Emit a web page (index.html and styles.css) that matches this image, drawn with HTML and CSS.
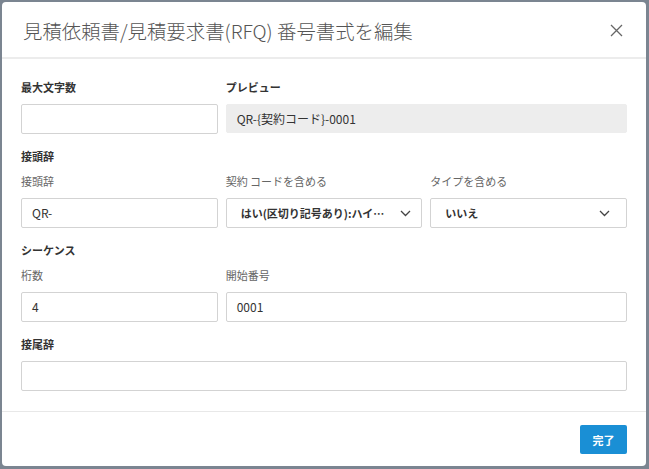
FILE: index.html
```html
<!DOCTYPE html>
<html lang="ja">
<head>
<meta charset="utf-8">
<title>番号書式を編集</title>
<link rel="stylesheet" href="styles.css">
</head>
<body>
<div class="modal">
  <div class="modal-header">
    <h1 class="modal-title">見積依頼書/見積要求書(RFQ) 番号書式を編集</h1>
    <button class="close" aria-label="閉じる">
      <svg width="13" height="13" viewBox="0 0 13 13"><path d="M1 1 L12 12 M12 1 L1 12" stroke="#666" stroke-width="1.3" fill="none"/></svg>
    </button>
  </div>
  <div class="modal-body">
    <div class="row">
      <div class="field">
        <div class="section-label">最大文字数</div>
        <div class="input"></div>
      </div>
      <div class="field span2">
        <div class="section-label">プレビュー</div>
        <div class="preview">QR-{契約コード}-0001</div>
      </div>
    </div>

    <div class="section">
      <div class="section-label">接頭辞</div>
      <div class="row">
        <div class="field">
          <div class="sub-label">接頭辞</div>
          <div class="input">QR-</div>
        </div>
        <div class="field">
          <div class="sub-label">契約 コードを含める</div>
          <div class="select select-wide"><span class="select-text">はい(区切り記号あり):ハイ…</span><svg class="chev" width="11" height="7" viewBox="0 0 11 7"><path d="M1 1 L5.5 5.5 L10 1" stroke="#444" stroke-width="1.3" fill="none"/></svg></div>
        </div>
        <div class="field">
          <div class="sub-label">タイプを含める</div>
          <div class="select"><span class="select-text">いいえ</span><svg class="chev" width="11" height="7" viewBox="0 0 11 7"><path d="M1 1 L5.5 5.5 L10 1" stroke="#444" stroke-width="1.3" fill="none"/></svg></div>
        </div>
      </div>
    </div>

    <div class="section">
      <div class="section-label">シーケンス</div>
      <div class="row">
        <div class="field">
          <div class="sub-label">桁数</div>
          <div class="input">4</div>
        </div>
        <div class="field span2">
          <div class="sub-label">開始番号</div>
          <div class="input">0001</div>
        </div>
      </div>
    </div>

    <div class="section">
      <div class="section-label">接尾辞</div>
      <div class="input"></div>
    </div>
  </div>
  <div class="modal-footer">
    <button class="btn-primary">完了</button>
  </div>
</div>
</body>
</html>
```

FILE: styles.css
```css
* { box-sizing: border-box; }
html, body { margin: 0; padding: 0; }
body {
  background: #7b8591;
  padding: 2px 3px 3px 2px;
  font-family: "Noto Sans CJK JP", "Noto Sans", sans-serif;
  color: #333;
  height: 469px;
  overflow: hidden;
}
.modal {
  background: #fff;
  border-radius: 4px;
  width: 644px;
  height: 464px;
  display: flex;
  flex-direction: column;
}
.modal-header {
  height: 57px;
  border-bottom: 2px solid #ececec;
  display: flex;
  align-items: center;
  justify-content: space-between;
  padding: 0 23px 0 21px;
}
.modal-title {
  margin: 0;
  font-size: 19.4px;
  font-weight: 300;
  color: #555;
  line-height: 24px;
  padding-top: 2px;
}
.close {
  border: 0;
  background: none;
  padding: 0;
  width: 13px;
  height: 13px;
  display: flex;
  margin-top: 2px;
}
.modal-body {
  padding: 20px 19px 20px 19px;
  flex: 1;
}
.row {
  display: grid;
  grid-template-columns: minmax(0, 1fr) minmax(0, 1fr) minmax(0, 1fr);
  column-gap: 8px;
}
.field { min-width: 0; }
.span2 { grid-column: span 2; }
.section { margin-top: 14px; }
.section-label {
  font-size: 11px;
  font-weight: 700;
  line-height: 16px;
  color: #333;
  margin-bottom: 9px;
}
.sub-label {
  font-size: 11px;
  line-height: 16px;
  color: #666;
  margin-bottom: 9px;
}
.input, .select, .preview {
  height: 30px;
  border: 1px solid #d3d3d3;
  border-radius: 2px;
  font-size: 12px;
  line-height: 28px;
  padding: 0 10px;
  color: #333;
}
.preview {
  background: #ededed;
  border-color: #ededed;
  height: 29px;
  margin-top: 1px;
  line-height: 27px;
}
.select {
  display: flex;
  align-items: center;
  padding: 0 16px 0 14px;
  font-size: 11px;
  font-weight: 700;
}
.select-text {
  flex: 1;
  white-space: nowrap;
}
.select-wide { padding-right: 10px; }
.chev { flex: none; }
.modal-footer {
  border-top: 1px solid #e8e8e8;
  display: flex;
  justify-content: flex-end;
  padding: 13px 19px 12px;
}
.btn-primary {
  background: #1a8fd5;
  color: #fff;
  border: 0;
  border-radius: 2px;
  width: 47px;
  height: 29px;
  font-family: "Noto Sans CJK JP", sans-serif;
  font-size: 11px;
  font-weight: 700;
}
```
